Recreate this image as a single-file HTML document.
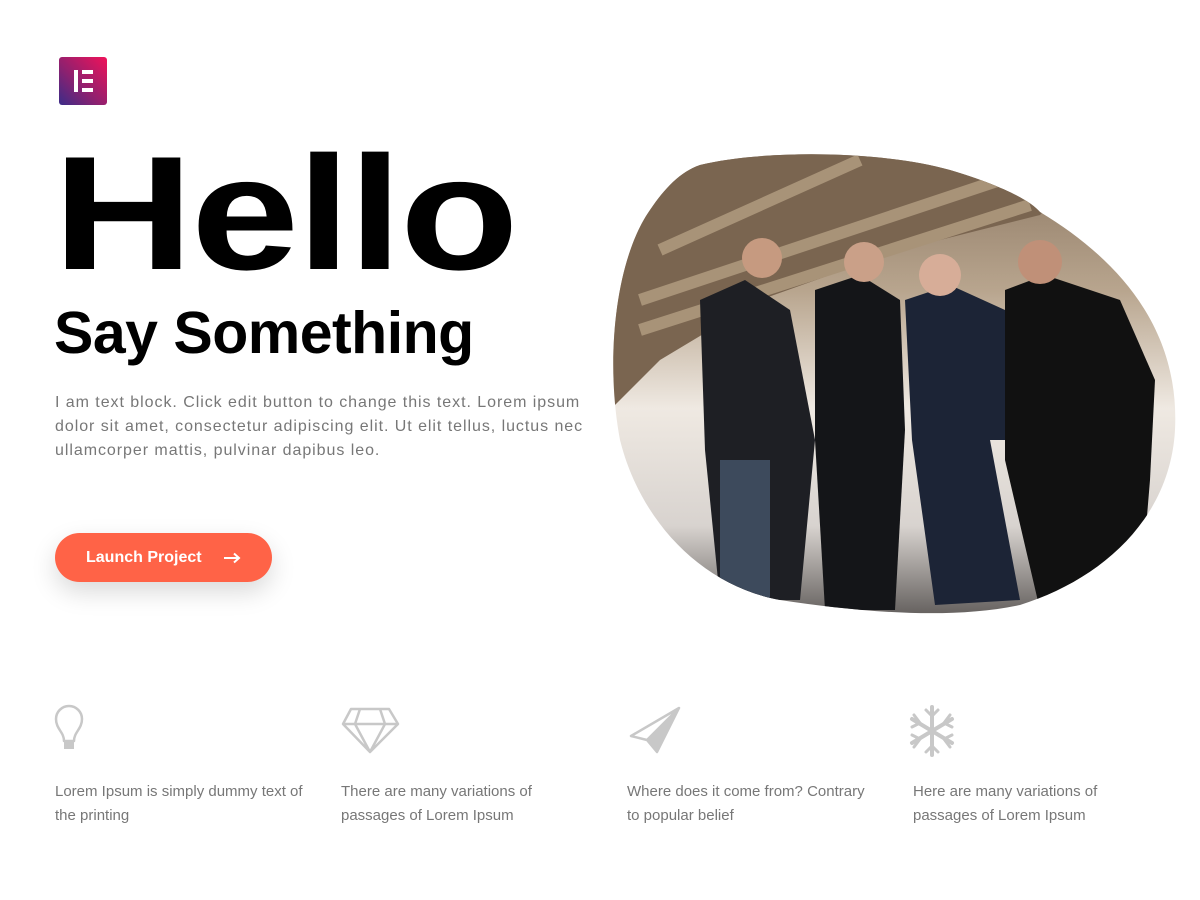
<!DOCTYPE html>
<html><head><meta charset="utf-8"><style>
*{margin:0;padding:0;box-sizing:border-box}
body{width:1200px;height:900px;background:#fff;font-family:"Liberation Sans",sans-serif;position:relative;overflow:hidden}
.logo{position:absolute;left:59px;top:57px;width:48px;height:48px;border-radius:3px;background:linear-gradient(225deg,#f0125a,#92206e 55%,#3b2c88)}
.logo i{position:absolute;background:#fff}
h1{position:absolute;left:53px;top:133px;font-size:162px;font-weight:bold;letter-spacing:-2px;line-height:1;color:#000;transform:scaleX(1.2);transform-origin:0 0}
h2{position:absolute;left:54px;top:304px;font-size:59px;font-weight:bold;letter-spacing:-0.5px;line-height:1;color:#000}
p.t{position:absolute;left:55px;top:391px;width:600px;font-size:16px;letter-spacing:0.95px;line-height:24px;color:#777;white-space:nowrap}
.btn{position:absolute;left:55px;top:533px;width:217px;height:49px;border-radius:25px;background:#ff6347;color:#fff;font-size:16px;font-weight:bold;line-height:49px;padding-left:31px;box-shadow:0 10px 25px rgba(0,0,0,.15)}
.btn svg{position:absolute;left:168px;top:19px}
.f{position:absolute;top:780px;width:252px;font-size:15px;line-height:24px;color:#777}
</style></head><body>
<div class="logo"><i style="left:15px;top:13px;width:4px;height:22px"></i><i style="left:23px;top:13px;width:11px;height:4px"></i><i style="left:23px;top:22px;width:11px;height:4px"></i><i style="left:23px;top:31px;width:11px;height:4px"></i></div>
<h1>Hello</h1>
<h2>Say Something</h2>
<p class="t">I am text block. Click edit button to change this text. Lorem ipsum<br>dolor sit amet, consectetur adipiscing elit. Ut elit tellus, luctus nec<br>ullamcorper mattis, pulvinar dapibus leo.</p>
<div class="btn">Launch Project<svg width="18" height="12" viewBox="0 0 18 12"><path d="M1 6 H16 M11 1.5 L16 6 L11 10.5" stroke="#fff" stroke-width="2" fill="none"/></svg></div>

<svg style="position:absolute;left:0;top:0" width="1200" height="900">
<defs><clipPath id="b"><path d="M700 165 C760 150 880 150 950 170 C1000 185 1030 200 1040 212 C1120 260 1180 330 1175 430 C1170 520 1100 580 1020 605 C950 620 860 612 780 600 C700 585 640 520 620 440 C605 360 615 260 650 210 C665 188 680 172 700 165 Z"/></clipPath>
<linearGradient id="sky" x1="0" y1="0" x2="0" y2="1"><stop offset="0" stop-color="#8a7560"/><stop offset=".3" stop-color="#b8a58e"/><stop offset=".55" stop-color="#efe9e2"/><stop offset=".8" stop-color="#d8d3cf"/><stop offset="1" stop-color="#5e5a58"/></linearGradient></defs>
<g clip-path="url(#b)">
<rect x="600" y="150" width="600" height="470" fill="url(#sky)"/>
<path d="M600 150 L1100 150 L1040 215 L900 250 L760 300 L660 360 L600 420 Z" fill="#7a6550"/>
<path d="M640 300 L1000 180 M640 330 L1030 205 M660 250 L860 160" stroke="#a89378" stroke-width="12"/>
<path d="M700 300 L745 280 L790 310 L815 440 L800 600 L720 600 L705 450 Z" fill="#1e1f24"/>
<path d="M720 460 L770 460 L770 600 L720 600Z" fill="#3d4a5c"/>
<circle cx="762" cy="258" r="20" fill="#c69a80"/>
<path d="M815 290 L860 275 L900 300 L905 430 L895 610 L825 610 L815 440Z" fill="#141518"/>
<circle cx="864" cy="262" r="20" fill="#caa088"/>
<path d="M905 300 L950 285 L1005 310 L1005 440 L990 440 L1020 600 L935 605 L912 440Z" fill="#1c2436"/>
<circle cx="940" cy="275" r="21" fill="#d7ad98"/>
<path d="M1005 290 L1045 275 L1120 300 L1155 380 L1150 480 L1140 600 L1040 610 L1005 460Z" fill="#111"/>
<circle cx="1040" cy="262" r="22" fill="#c09078"/>
</g>
<g fill="none" stroke="#c8c8c8" stroke-width="2.5" stroke-linejoin="round">
<path d="M64 741 C64 732 56 729 56 719 A13 13 0 0 1 82 719 C82 729 74 732 74 741 Z"/>
<rect x="64" y="740" width="10" height="9" fill="#c8c8c8" stroke="none"/>
<path d="M351 709 L389 709 L398 724 L370 752 L343 724 Z M343 724 L398 724 M360 709 L355 724 L370 752 L385 724 L380 709"/>
<path d="M679 708 L631 736 L647 740 L657 752 Z M679 708 L647 740"/>
</g>
<path d="M679 708 L647 740 L657 752 Z" fill="#c8c8c8"/>
<g stroke="#c8c8c8" stroke-width="4" stroke-linecap="round">
<path d="M932 707 L932 755 M912 719 L952 743 M912 743 L952 719"/>
<path d="M926 710 L932 716 L938 710 M926 752 L932 746 L938 752 M912 727 L920 723 L914 715 M952 735 L944 739 L950 747 M912 735 L920 739 L914 747 M952 727 L944 723 L950 715" stroke-width="3" fill="none"/>
</g>
</svg>

<div class="f" style="left:55px">Lorem Ipsum is simply dummy text of the printing</div>
<div class="f" style="left:341px">There are many variations of passages of Lorem Ipsum</div>
<div class="f" style="left:627px">Where does it come from? Contrary to popular belief</div>
<div class="f" style="left:913px">Here are many variations of passages of Lorem Ipsum</div>
</body></html>
